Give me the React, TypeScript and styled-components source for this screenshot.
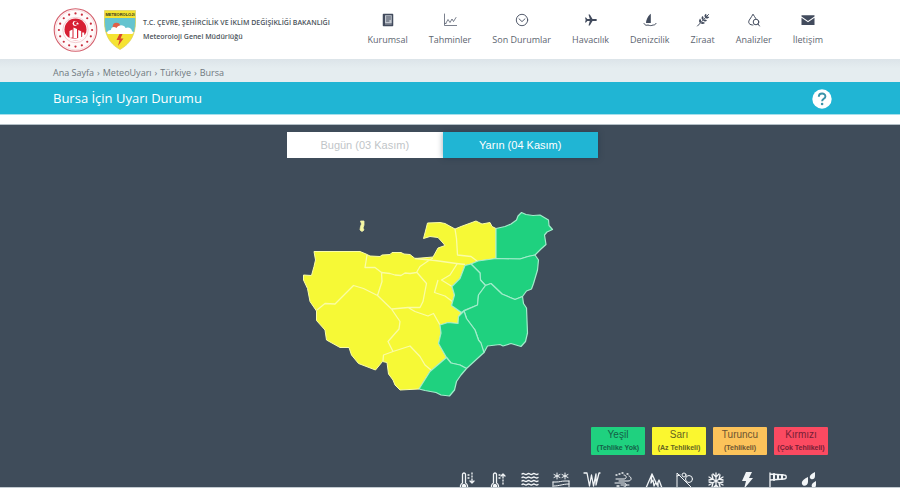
import React, { useState } from "react";
import styled, { createGlobalStyle } from "styled-components";

const GlobalStyle = createGlobalStyle`
  * { box-sizing: border-box; }
  body { margin: 0; background: #fff; font-family: "Open Sans", "Noto Sans", sans-serif; }
  button { font: inherit; border: 0; padding: 0; background: none; cursor: pointer; }
  a { color: inherit; text-decoration: none; }
`;

const Page = styled.div`
  display: flex;
  flex-direction: column;
  height: 100vh;
  overflow: hidden;
  border-bottom: 1px solid #c3cbd1;
`;

const Header = styled.header`
  display: flex;
  flex: none;
  align-items: center;
  justify-content: space-between;
  height: 59px;
  padding: 1px 77px 0 53px;
  background: #fff;
`;

const Brand = styled.a`
  display: flex;
  align-items: center;
`;

const Logos = styled.span`
  display: flex;
  align-items: center;
  gap: 6px;
`;

const BrandText = styled.div`
  margin-left: 7px;
  color: #4b535a;
  font-size: 7px;
  font-weight: 600;
  line-height: 14px;
  white-space: nowrap;
`;

const Nav = styled.nav`
  display: flex;
  gap: 21px;
`;

const NavLink = styled.a`
  display: flex;
  flex-direction: column;
  align-items: center;
  gap: 6px;
  color: #5d6570;
  font-size: 9px;
  line-height: 14px;
  white-space: nowrap;
  svg { color: #424b5d; }
`;

const Breadcrumb = styled.nav`
  display: flex;
  flex: none;
  gap: 3px;
  align-items: center;
  height: 23px;
  padding: 4px 53px 0;
  background: linear-gradient(#dce4e9, #e5edf0 40%);
  color: #6f787e;
  font-size: 9px;
  line-height: 14px;
`;

const Separator = styled.span`
  font-size: 9px;
`;

const TitleBar = styled.div`
  display: flex;
  flex: none;
  align-items: center;
  justify-content: space-between;
  height: 33px;
  padding: 0 68px 0 53px;
  border-bottom: 1px solid #a6dfeb;
  background: #20b5d4;
  color: #fff;
`;

const Title = styled.h1`
  margin: 0;
  font-size: 13px;
  font-weight: 400;
  line-height: 20px;
`;

const HelpButton = styled.button`
  display: flex;
  padding-top: 2px;
  color: #fff;
`;

const Stage = styled.main`
  display: flex;
  flex: 1 0 auto;
  flex-direction: column;
  margin-top: 9px;
  padding: 7px 72px 0 53px;
  border-top: 1px solid #b3bfc6;
  background: #3f4c5a;
`;

const Tabs = styled.div`
  display: flex;
  align-self: center;
  width: 40%;
  min-width: 311px;
  margin-left: 4px;
`;

const Tab = styled.button<{ $active: boolean }>`
  flex: 1;
  height: 26px;
  background: ${(p) => (p.$active ? "#20b5d4" : "#fff")};
  box-shadow: ${(p) => (p.$active ? "0 0 6px rgba(20, 45, 65, 0.4)" : "none")};
  color: ${(p) => (p.$active ? "#fff" : "#bfc5c8")};
  font-family: "Liberation Sans", Arial, sans-serif;
  font-size: 11px;
  line-height: 16px;
`;

const MapHolder = styled.div`
  display: flex;
  justify-content: center;
  margin: 46px 0 27px 5px;
`;

const Legend = styled.ul`
  display: flex;
  justify-content: flex-end;
  gap: 7px;
  margin: 0;
  padding: 0;
  list-style: none;
  font-family: "Liberation Sans", Arial, sans-serif;
`;

const LegendItem = styled.li<{ $bg: string; $fg: string }>`
  width: 54px;
  height: 28px;
  padding-top: 1px;
  border-radius: 1px;
  background: ${(p) => p.$bg};
  color: ${(p) => p.$fg};
  text-align: center;
  white-space: nowrap;
`;

const LegendName = styled.div`
  font-size: 10px;
  line-height: 14px;
`;

const LegendNote = styled.div`
  font-size: 7px;
  font-weight: 700;
  line-height: 11px;
`;

const Hazards = styled.div`
  display: flex;
  justify-content: flex-end;
  gap: 13px;
  padding: 17px 10px 0 0;
`;

const HazardButton = styled.button`
  display: flex;
  color: #f2f5f7;
`;

const Ministry = () => {
  const dots = Array.from({ length: 16 }, (_, i) => (i * Math.PI) / 8);
  return (
    <svg width="45" height="46" viewBox="0 0 45 46" aria-hidden="true">
      <circle cx="22.5" cy="23" r="21.3" fill="#fffafa" stroke="#d4606d" strokeWidth="1.1" />
      <circle cx="22.5" cy="23" r="19.8" fill="none" stroke="#efc0c5" strokeWidth=".5" />
      {dots.map((a) => (
        <circle key={a} cx={22.5 + 16.6 * Math.cos(a)} cy={23 + 16.6 * Math.sin(a)} r="1.1" fill="#c92c3c" />
      ))}
      <circle cx="22.5" cy="23" r="12.7" fill="none" stroke="#e5a0a8" strokeWidth=".5" />
      <circle cx="22.5" cy="22.5" r="11" fill="#d71f33" />
      <circle cx="22" cy="16.5" r="2.4" fill="#fff" />
      <circle cx="22.9" cy="16.2" r="1.9" fill="#d71f33" />
      <path d="m24.5 15 .4.9 1 .1-.7.7.2 1-.9-.5-.9.5.2-1-.7-.7 1-.1z" fill="#fff" />
      <path d="M16.5 31v-7l3-1.500v8M20.500 31V20.500l3.500 1.500v9M25.200 31v-8l3 1.300V31M29.200 30v-4.500h2v4" fill="#fff" />
      <path d="M11.500 26c3 5 7 6 11.500 5.500 5-.5 8-2.500 10-5.500-1 5-5 7.500-10.500 7.500S12.500 31 11.500 26z" fill="#fff" />
    </svg>
  );
};

const Shield = () => (
  <svg width="32" height="42" viewBox="0 0 32 42" aria-hidden="true">
    <defs>
      <clipPath id="shield"><path d="M.5 1.500h31v11C31.500 25 27 34.500 16 40.500 5 34.500.5 25 .5 12.500z" /></clipPath>
    </defs>
    <g clipPath="url(#shield)">
      <path d="M0 0h32v42H0z" fill="#f5e332" />
      <path d="M0 9h32v14H0z" fill="#65c4cf" />
      <circle cx="12.500" cy="17.500" r="3.800" fill="#df6047" />
      <path d="M3 24c0-2 2-3 4-3 0-3 3-4 5.500-2 2-4 8-3.500 9 0 3-1.500 6 0 6.500 3l2 2-2 1H4z" fill="#fff" />
    </g>
    <path d="M.5 1.500h31v11C31.500 25 27 34.500 16 40.500 5 34.500.5 25 .5 12.500z" fill="none" stroke="#d8cf61" strokeWidth=".7" />
    <text x="16" y="7" textAnchor="middle" fontFamily="Liberation Sans Narrow, Liberation Sans, sans-serif" fontWeight="700" fontSize="4" fill="#34341d">METEOROLOJİ</text>
    <path d="m15.500 25-3 6h3L14 37l5.500-7.500h-3L18.500 25z" fill="#d84b2d" />
  </svg>
);

const stroke = { fill: "none", stroke: "currentColor", strokeWidth: 1, strokeLinecap: "round", strokeLinejoin: "round" } as const;

const NAV = [
  ["Kurumsal", <g><path d="M2.500 1.500h9v11h-9z" {...stroke} fill="#c3c8d0" strokeWidth={1.500} /><path d="M2 1h2v12H2z" fill="currentColor" /><path d="M5.500 4h4M5.500 6h4M5.500 8h2.500M4 11h7" {...stroke} /></g>],
  ["Tahminler", <path d="M1.500 1v11.500H14M3 10l2-3.500 2 3L9 6l1.500 2.500 2.500-4M2 10.500h1" {...stroke} strokeWidth={0.700} />],
  ["Son Durumlar", <g {...stroke} strokeWidth={0.900}><circle cx="7" cy="7" r="5.700" /><path d="m4 5.800 3 2.800 3-2.800" /></g>],
  ["Havacılık", <path d="M13 7c0-.7-.8-1-2-1H8.500L5.800 1.500H4.500L5.800 6H3.300L2 4.500H1L1.700 7 1 9.500h1L3.300 8h2.500l-1.300 4.500h1.300L8.500 8H11c1.200 0 2-.3 2-1z" fill="currentColor" />],
  ["Denizcilik", <g><path d="M7.800.8v9.200H3C3.200 6.500 5.200 2.500 7.800.8z" fill="currentColor" /><path d="M1 10.500c1 2 2.500 2 4 1.500 2 .8 3.500.8 5 0 1 .1 2.500-.2 3-1.500" {...stroke} /></g>],
  ["Ziraat", <g><path d="M1.500 13 12.500 1.500" {...stroke} /><path d="M4 10c-1.500-1.500-1-3 0-4.500C5.500 7 5.500 8.500 4 10zm2.500-3C5 5.500 5.500 4 6.500 3 8 4.500 8 6 6.500 7zM9 4.500C8 3 8.500 1.500 10 .8c1 1.500.5 3-1 3.700zM4.500 10c1.500 1.500 3 1 4.500 0C7.500 8.500 6 8.500 4.500 10zM7 7.500C8.500 9 10 8.500 11 7.500 9.500 6 8 6 7 7.500zM9.500 5c1.500 1 3 .5 3.700-1-1.500-1-3-.5-3.700 1z" fill="currentColor" /></g>],
  ["Analizler", <g {...stroke}><path d="M6 12H5.500C1 11.500 1 8.500 3 6c1-1.500 2-3 3-4.800C7 3 8 4 8.800 5.500" /><circle cx="9" cy="9" r="2.800" /><path d="m11 11 1.500 2" /></g>],
  ["İletişim", <g><path d="M.5 3.500V2.300h13v1.200L7 8z" fill="currentColor" /><path d="m.5 4.700 6.500 4.600 6.500-4.600V12H.5z" fill="currentColor" /></g>],
] as const;

const HAZARDS: [string, React.ReactNode][] = [
  ["Soğuk", <><path d="M3.500 11V2.500a1.500 1.500 0 0 1 3 0V11a3.500 3.500 0 1 1-3 0zM9 3h1M9 6h1" /><circle cx="5" cy="14" r="1.500" fill="currentColor" /><path d="M13 1v1m0 2v1m0 2v4m-2-2 2 2 2-2" /></>],
  ["Sıcak", <><path d="M3.500 11V2.500a1.500 1.500 0 0 1 3 0V11a3.500 3.500 0 1 1-3 0zM9 3h1M9 6h1" /><circle cx="5" cy="14" r="1.500" fill="currentColor" /><path d="M13 12v-1m0-2V8m0-2V2m-2 2 2-2 2 2" /></>],
  ["Sel", <path d="M1 2c2-2 3 2 5.300 0s3 2 5.300 0 3 2 5.400 0M1 5.500c2-2 3 2 5.300 0s3 2 5.300 0 3 2 5.400 0M1 9c2-2 3 2 5.300 0s3 2 5.300 0 3 2 5.400 0M1 12.500c2-2 3 2 5.300 0s3 2 5.300 0 3 2 5.400 0M1 16c2-2 3 2 5.300 0s3 2 5.300 0 3 2 5.400 0" />],
  ["Don", <><path d="M5 1v6M2 2.500l6 3M8 2.500l-6 3M13 1v6M10 2.500l6 3M16 2.500l-6 3M1 10h3c4 0 5-1 9-1h4M1 16v-6M17 16V9M2 14c6 0 8-2 15-2" strokeWidth="1" /></>],
  ["Buzlanma", <path d="M1 1h3l2.500 13L8.500 3l2 11L13 2v11l3-12h1" />],
  ["Toz taşınımı", <><path d="M2 7h8c3 0 3-4 0-4M5 9h9c4 0 4-4 1-5M1 11h9c3 0 3 4 0 4M7 13h8" strokeWidth="1" /><path d="M2 3h1M5 2h1M8 1h1M13 2h1M3 14h2M13 16h2" /></>],
  ["Çığ", <path d="m1 16 6-14 5 11 2-5 3 8M7 2l-1 9 2-3 1 6 2-4M13 10v5" />],
  ["Kuvvetli kar", <g strokeWidth="1"><path d="M1 17V1l15 15M1 4l3-1" /><circle cx="8" cy="3" r="2" /><circle cx="13" cy="7" r="3.500" /></g>],
  ["Kar", <path d="M9 1v16M2 5l14 8M16 5 2 13M6 2l3 3 3-3M6 16l3-3 3 3M2 8l4-1-1-4M16 10l-4 1 1 4M16 8l-4-1 1-4M2 10l4 1-1 4" />],
  ["Gök gürültülü sağanak", <path d="M8 0h6l-3 6h4L6 17l2-8H4z" fill="currentColor" stroke="none" />],
  ["Rüzgâr", <><path d="M1 17V1M1 2l14 1c3 0 3 4 0 4L1 8" /><path d="M5 2v6M9 3v4M13 3v4" strokeWidth="2" /></>],
  ["Yağmur", <path d="M15 0c-4 2-6 4-5 6s5 2 5-2zM8 5C4 7 1 9 2 12s6 2 6-2zM16 9c-4 2-5 4-4 6s4 1 4-2z" fill="currentColor" stroke="none" />],
];

const YELLOW_LAND = "M314 251.500H360L366 254 370 256 380 256.500 382 255 390 254.500 392 252.500H401L404 254 410 254.500 415 258.500 433 257 438 248 445 245.500 443 243 438 237.500 430 236.500 423.500 238.500 425.500 231 427.500 223 440 222.500 445 223.500 455 229 461 226.500 476 221 482 224 490 222.500 492 226.500 496 228.500V258.500L478 261 471 264 465 265.500 460 278.500 452 286.500 454.500 295 451.500 305.500 461 312.500 458.500 316.500 458 323.500 448 322.500 440 325 441 333 438.500 343.500 446.500 357.500 430 371.500 419 389 400 390 395 385 393 380 388.500 374 387 362.500 382.500 361.500 375.500 370 358.500 363.500 351.500 355 349 347.500H340L326.500 340 325 330 316.500 320.500V311L310 301.500 307.500 288.500 303.500 280V275L311.500 275.500 314 266.500 315.500 260Z";
const GREEN = [
  "M496 228.500 505 226.500 511 224 516.500 220 518 216 521.500 212.500 526 214.500 533 215.500 540 215 548.500 220 549 225.500 552.500 229.500 547 232 544.500 235 546 244.500 541 249 535 255 528 256.500 520 259 496 258.500Z",
  "M471 264 478 261 496 258.500 520 259 528 256.500 535 255 538.500 260 537.500 270 533.500 283.500 531.500 289 526.500 291 522.500 296.500 515 299.500 502 294 491 283.500 485.500 285.500 480.500 280 480 273Z",
  "M471 264 465 265.500 460 278.500 452 286.500 454.500 295 451.500 305.500 461.500 312.500 465 310 477.500 305 478.500 295 485.500 285.500 480.500 280 480 273Z",
  "M485.500 285.500 491 283.500 502 294 515 299.500 522.500 296.500 523.500 303.500 526.500 308 527.500 333 525.500 341.500 521 346.500 511 343.500 503 346 500 344.500 487.500 346 484 352.500 478.500 340 475 330 466.500 318.500 464 311 477.500 305 478.500 295Z",
  "M464 311 458.500 316.500 458 323.500 448 322.500 440 325 441 333 438.500 343.500 446.500 357.500 451 363 460 365 466.500 368.500 484 352.500 481 343 478.500 340 475 330 466.500 318.500Z",
  "M446.500 357.500 430 371.500 419 389 425 390.500 436 392.500 441 395 449.500 396 454.500 390 456.500 381.500 461 375 466.500 368.500 460 365 451 363Z",
];
const DISTRICT_LINES =
  "M367 255 365 267.500 375 267.500 381.500 272.500 390 273.500 395 275 401 275.500 405 273 410 273.500 416.500 272.500 420 266.500 428 261 433 258M381.500 272.500 382 281.500 377.500 295.500 391.500 309 400 321.500 399 329 388 341.500 393 351.500 383.500 355 383 361M317 310 325 303.500 335 304 353.500 285.500 363.500 288.500 377.500 295.500M417 272.500 426.500 283.500 423 301.500 420 307.500H408L392 309M408 307.500 415 311.500 428 316 433.500 313.500 440 325M393 351.500 410 346 420 356.500 425 365 431 370M455 229 456.500 238.500 457.500 255 471 256.500 477 261M415 258.500 435 260.500 456.500 263.500 465 264.500M457 264 450 275 441.500 280 452 286.500M438 280 434.500 292.500 445 296 453 302";

const ProvinceMap = () => (
  <svg width="296" height="196" viewBox="295 204 296 196" role="img" aria-label="Bursa">
    <path d={YELLOW_LAND} fill="#f6f936" stroke="#fbfda6" strokeWidth="1" strokeLinejoin="round" />
    <path d={DISTRICT_LINES} fill="none" stroke="#fafca5" strokeWidth="1.300" strokeLinejoin="round" />
    {GREEN.map((d) => (
      <path key={d} d={d} fill="#1fd17f" stroke="#a1edcb" strokeWidth="1.200" strokeLinejoin="round" />
    ))}
    <path d="M360.500 221h3.500v4l-1 3 1 2-2 1.500-2-1.500.5-3.500 1-2.500z" fill="#f6f9a0" stroke="#f5f5b0" strokeWidth=".8" />
  </svg>
);

const LEVELS = [
  ["Yeşil", "(Tehlike Yok)", "#1fd17f", "#145f47"],
  ["Sarı", "(Az Tehlikeli)", "#fbf72f", "#656322"],
  ["Turuncu", "(Tehlikeli)", "#fcc35a", "#6d5532"],
  ["Kırmızı", "(Çok Tehlikeli)", "#fb4a61", "#751f36"],
];

const CRUMBS = ["Ana Sayfa", "MeteoUyarı", "Türkiye", "Bursa"];
const DAYS = ["Bugün (03 Kasım)", "Yarın (04 Kasım)"];

export default function App() {
  const [day, setDay] = useState(1);
  return (
    <Page>
      <GlobalStyle />
      <Header>
        <Brand href="#">
          <Logos>
            <Ministry />
            <Shield />
          </Logos>
          <BrandText>
            <div>T.C. ÇEVRE, ŞEHİRCİLİK VE İKLİM DEĞİŞİKLİĞİ BAKANLIĞI</div>
            <div>Meteoroloji Genel Müdürlüğü</div>
          </BrandText>
        </Brand>
        <Nav>
          {NAV.map(([label, icon]) => (
            <NavLink href="#" key={label}>
              <svg width="14" height="14" viewBox="0 0 14 14" aria-hidden="true">{icon}</svg>
              {label}
            </NavLink>
          ))}
        </Nav>
      </Header>
      <Breadcrumb>
        {CRUMBS.map((c, i) => (
          <React.Fragment key={c}>
            {i > 0 && <Separator>›</Separator>}
            <a href="#">{c}</a>
          </React.Fragment>
        ))}
      </Breadcrumb>
      <TitleBar>
        <Title>Bursa İçin Uyarı Durumu</Title>
        <HelpButton aria-label="Yardım">
          <svg width="20" height="20" viewBox="0 0 20 20">
            <circle cx="10" cy="10" r="9.700" fill="currentColor" />
            <path d="M6.800 7.800c0-4.300 6.600-4.200 6.600-.4 0 2.400-3.300 2.500-3.300 4.900" fill="none" stroke="#3a93a8" strokeWidth="1.900" />
            <circle cx="10.100" cy="15" r="1.300" fill="#3a93a8" />
          </svg>
        </HelpButton>
      </TitleBar>
      <Stage>
        <Tabs role="tablist">
          {DAYS.map((d, i) => (
            <Tab key={d} role="tab" aria-selected={day === i} $active={day === i} onClick={() => setDay(i)}>
              {d}
            </Tab>
          ))}
        </Tabs>
        <MapHolder><ProvinceMap /></MapHolder>
        <Legend>
          {LEVELS.map(([name, note, bg, fg]) => (
            <LegendItem key={name} $bg={bg} $fg={fg}>
              <LegendName>{name}</LegendName>
              <LegendNote>{note}</LegendNote>
            </LegendItem>
          ))}
        </Legend>
        <Hazards>
          {HAZARDS.map(([label, icon]) => (
            <HazardButton key={label} aria-label={label}>
              <svg width="18" height="18" viewBox="0 0 18 18" {...stroke} strokeWidth={1.3}>{icon}</svg>
            </HazardButton>
          ))}
        </Hazards>
      </Stage>
    </Page>
  );
}
